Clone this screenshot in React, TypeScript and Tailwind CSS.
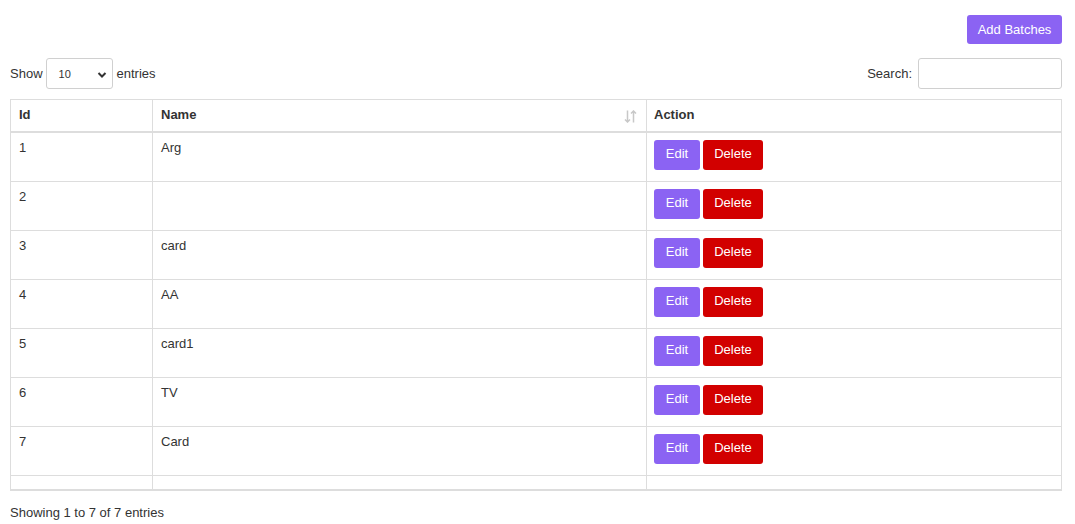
import React from "react";

const rows = [
  { id: 1, name: "Arg" },
  { id: 2, name: "" },
  { id: 3, name: "card" },
  { id: 4, name: "AA" },
  { id: 5, name: "card1" },
  { id: 6, name: "TV" },
  { id: 7, name: "Card" },
];

export default function App() {
  return (
    <div
      className="w-[1075px] h-[524px] bg-white text-[#333] text-[13px] px-[10px] pt-[15px]"
      style={{ fontFamily: '"Liberation Sans", Arial, sans-serif' }}
    >
      <div className="flex justify-end pr-[3px]">
        <button className="h-[29px] w-[95px] rounded-[3px] bg-[#8b63f3] text-white text-[13px] leading-none">
          Add Batches
        </button>
      </div>
      <div className="flex items-center justify-between mt-[14px] h-[31px] pr-[3px]">
        <div className="flex items-center">
          <span>Show</span>
          <div className="relative ml-[3px] mr-[4px] h-[31px] w-[67px] rounded-[3px] border border-[#d0d0d0] flex items-center pl-[12px] pt-[2px] text-[11px]">
            <span>10</span>
            <svg className="absolute right-[5px] top-[12px]" width="10" height="8" viewBox="0 0 10 8">
              <path d="M1.5 2 L5 5.5 L8.5 2" stroke="#333" strokeWidth="2" fill="none" />
            </svg>
          </div>
          <span>entries</span>
        </div>
        <div className="flex items-center">
          <span className="mr-[6px]">Search:</span>
          <div className="h-[31px] w-[144px] rounded-[3px] border border-[#d0d0d0]" />
        </div>
      </div>
      <table className="mt-[10px] w-[1052px] border-collapse border border-[#ddd]">
        <thead>
          <tr className="h-[32px]">
            <th className="w-[142px] border border-[#ddd] border-b-2 px-[8px] pb-[2px] text-left font-bold">Id</th>
            <th className="w-[494px] border border-[#ddd] border-b-2 px-[8px] pb-[2px] text-left font-bold relative">
              Name
              <svg className="absolute right-[9px] top-[10px]" width="13" height="13" viewBox="0 0 13 13">
                <path d="M3.5 0.5 V12 M1 9.5 L3.5 12 L6 9.5" stroke="#c8c8c8" strokeWidth="1.5" fill="none" />
                <path d="M9.5 12.5 V1 M7 3.5 L9.5 1 L12 3.5" stroke="#c8c8c8" strokeWidth="1.5" fill="none" />
              </svg>
            </th>
            <th className="border border-[#ddd] border-b-2 px-[7px] pb-[2px] text-left font-bold">Action</th>
          </tr>
        </thead>
        <tbody>
          {rows.map((r) => (
            <tr key={r.id} className="h-[49px]">
              <td className="border border-[#ddd] px-[8px] pt-[6px] align-top leading-[18px]">{r.id}</td>
              <td className="border border-[#ddd] px-[8px] pt-[6px] align-top leading-[18px]">{r.name}</td>
              <td className="border border-[#ddd] px-[7px] pt-[7px] pb-[11px] align-top">
                <div className="flex gap-[3px]">
                  <button className="h-[30px] w-[46px] rounded-[3px] bg-[#8b63f3] text-white text-[13px] pb-[1px]">Edit</button>
                  <button className="h-[30px] w-[60px] rounded-[3px] bg-[#d20000] text-white text-[13px] pb-[1px]">Delete</button>
                </div>
              </td>
            </tr>
          ))}
          <tr className="h-[15px]">
            <td className="border border-[#ddd] border-b-2"></td>
            <td className="border border-[#ddd] border-b-2"></td>
            <td className="border border-[#ddd] border-b-2"></td>
          </tr>
        </tbody>
      </table>
      <div className="mt-[12px] text-[13px]">Showing 1 to 7 of 7 entries</div>
    </div>
  );
}
